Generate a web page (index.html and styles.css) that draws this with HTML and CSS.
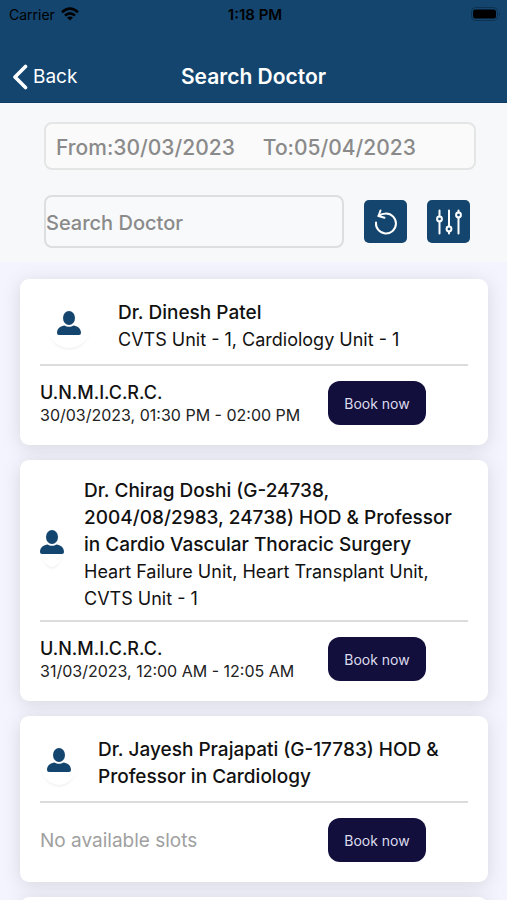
FILE: index.html
```
<!DOCTYPE html>
<html lang="en">

<head>
    <meta charset="UTF-8">
    <meta name="viewport" content="width=device-width, initial-scale=1.0">
    <title>Search Doctor</title>
    <link rel="stylesheet" href="styles.css">
</head>

<body>
    <!-- shared icons -->
    <svg class="sprite" aria-hidden="true">
        <symbol id="person" viewBox="0 0 24 24">
            <ellipse cx="12" cy="7" rx="6" ry="7" />
            <path d="M0 22C0 17 4 15 7.500 14.500C10 16.200 14 16.200 16.500 14.500C20 15 24 17 24 22Q24 24 22 24H2Q0 24 0 22Z" />
        </symbol>
    </svg>

    <header class="topbar">
        <div class="status">
            <div class="carrier">
                <span>Carrier</span>
                <svg width="18" height="14" viewBox="0 0 18 14" fill="none" stroke="#000" stroke-width="2.600">
                    <path d="M1 5.200Q9 -2 17 5.200" />
                    <path d="M4 8.500Q9 4.200 14 8.500" />
                    <path d="M9 13.500L6 10.600Q9 8.400 12 10.600Z" fill="#000" stroke="none" />
                </svg>
            </div>
            <div class="clock">1:18 PM</div>
            <svg class="battery" width="30" height="14" viewBox="0 0 30 14">
                <rect x="0.500" y="0.500" width="26" height="13" rx="4" fill="none" stroke="#0e3352" />
                <rect x="2" y="2.500" width="23" height="9" rx="2.500" />
                <path d="M28 5Q30 7 28 9Z" fill="#0e3352" />
            </svg>
        </div>
        <nav class="nav">
            <a class="back" href="#">
                <svg width="16" height="26" viewBox="0 0 16 26" fill="none" stroke="#fff" stroke-width="3.600" stroke-linecap="round" stroke-linejoin="round">
                    <path d="M13.500 2.500L3 13L13.500 23.500" />
                </svg>
                Back
            </a>
            <h1 class="title">Search Doctor</h1>
        </nav>
    </header>

    <form class="filters">
        <button class="dates" type="button">
            <span>From:30/03/2023</span>
            <span>To:05/04/2023</span>
        </button>
        <div class="search_row">
            <input class="search" type="text" placeholder="Search Doctor" aria-label="Search Doctor">
            <button class="icon_btn" type="button" aria-label="Reset">
                <svg width="24" height="26" viewBox="0 0 24 26" fill="none" stroke="#fff" stroke-width="2" stroke-linecap="round" stroke-linejoin="round">
                    <path d="M2 13.500A10 10 0 1 0 12 4.500Q8 4.500 4.500 7" />
                    <path d="M6.500 1.500L4.500 7L10.500 8.800" />
                </svg>
            </button>
            <button class="icon_btn" type="button" aria-label="Filter">
                <svg width="26" height="26" viewBox="0 0 26 26" fill="none" stroke="#fff" stroke-width="2" stroke-linecap="round">
                    <path d="M3.500 1.500V7.500M3.500 12.500V24.500" />
                    <path d="M13 1.500V17.500M13 22.500V24.500" />
                    <path d="M22.500 1.500V3.500M22.500 8.500V24.500" />
                    <circle cx="3.500" cy="10" r="2.400" />
                    <circle cx="13" cy="20" r="2.400" />
                    <circle cx="22.500" cy="6" r="2.400" />
                </svg>
            </button>
        </div>
    </form>

    <main class="list">
        <article class="card">
            <div class="doctor">
                <div class="avatar">
                    <div class="disc"><svg class="person"><use href="#person" /></svg></div>
                </div>
                <div class="info">
                    <h2 class="name">Dr. Dinesh Patel</h2>
                    <div>CVTS Unit - 1, Cardiology Unit - 1</div>
                </div>
            </div>
            <div class="slot">
                <div class="place">
                    <div class="hospital">U.N.M.I.C.R.C.</div>
                    <div class="time">30/03/2023, 01:30 PM - 02:00 PM</div>
                </div>
                <button class="book" type="button">Book now</button>
            </div>
        </article>

        <article class="card">
            <div class="doctor">
                <div class="avatar avatar_small">
                    <div class="disc"><svg class="person"><use href="#person" /></svg></div>
                </div>
                <div class="info">
                    <h2 class="name">Dr. Chirag Doshi (G-24738, 2004/08/2983, 24738) HOD &amp; Professor in Cardio Vascular Thoracic Surgery</h2>
                    <div>Heart Failure Unit, Heart Transplant Unit, CVTS Unit - 1</div>
                </div>
            </div>
            <div class="slot">
                <div class="place">
                    <div class="hospital">U.N.M.I.C.R.C.</div>
                    <div class="time">31/03/2023, 12:00 AM - 12:05 AM</div>
                </div>
                <button class="book" type="button">Book now</button>
            </div>
        </article>

        <article class="card">
            <div class="doctor">
                <div class="avatar avatar_medium">
                    <div class="disc"><svg class="person"><use href="#person" /></svg></div>
                </div>
                <div class="info">
                    <h2 class="name">Dr. Jayesh Prajapati (G-17783) HOD &amp; Professor in Cardiology</h2>
                </div>
            </div>
            <div class="slot">
                <div class="place empty">No available slots</div>
                <button class="book" type="button">Book now</button>
            </div>
        </article>

        <article class="card"></article>
    </main>
</body>

</html>
```
FILE: styles.css
```
* {
    box-sizing: border-box;
}

body {
    margin: 0;
    height: 100vh;
    display: flex;
    flex-direction: column;
    background-color: #f4f4fe;
    color: #111;
    font-family: 'Inter', sans-serif;
    font-size: 18px;
}

button,
input {
    font-family: inherit;
}

.sprite {
    display: none;
}

/* top bar */
.topbar {
    flex-shrink: 0;
    background-color: #14456e;
    border-bottom: 1px solid #0e3c63;
}

.status {
    height: 28px;
    padding: 0 6px 0 9px;
    display: grid;
    grid-template-columns: 1fr auto 1fr;
    align-items: center;
    color: #000;
    font-size: 14px;
}

.carrier {
    display: flex;
    align-items: center;
    gap: 6px;
}

.clock {
    font-size: 15px;
    font-weight: 600;
}

.battery {
    justify-self: end;
}

.nav {
    height: 74px;
    padding: 23px 12px 0;
    display: grid;
    grid-template-columns: 1fr auto 1fr;
    align-items: center;
    color: #fff;
}

.back {
    display: flex;
    align-items: center;
    gap: 5px;
    color: #fff;
    font-size: 19px;
    text-decoration: none;
}

.title {
    margin: 0;
    font-size: 21px;
    font-weight: 600;
}

/* dates and search */
.filters {
    flex-shrink: 0;
    padding: 19px 31px 14px 44px;
    display: flex;
    flex-direction: column;
    gap: 25px;
    background-color: #f7f8fa;
}

.dates {
    height: 48px;
    padding: 2px 10px 0;
    display: flex;
    align-items: center;
    gap: 28px;
    border: 2px solid #e4e6e6;
    border-radius: 8px;
    background-color: #fafafa;
    color: #8a8a8a;
    font-size: 21px;
    font-weight: 500;
}

.search_row {
    display: flex;
    align-items: center;
    gap: 20px;
    padding-right: 6px;
}

.search {
    flex: 1;
    min-width: 0;
    height: 53px;
    padding: 2px 0 0;
    border: 2px solid #dcdedf;
    border-radius: 8px;
    background-color: #f8f9fb;
    color: #111;
    font-size: 20px;
    font-weight: 500;
}

.search::placeholder {
    color: #8a8a8a;
}

.icon_btn {
    width: 43px;
    height: 43px;
    padding: 0;
    display: flex;
    justify-content: center;
    align-items: center;
    border: none;
    border-radius: 5px;
    background-color: #14456e;
}

/* doctor cards */
.list {
    flex: 1;
    min-height: 0;
    overflow: hidden;
    padding: 17px 19px 0 20px;
    display: flex;
    flex-direction: column;
    gap: 15px;
}

.card {
    flex-shrink: 0;
    padding: 17px 20px 20px;
    border-radius: 9px;
    background-color: #fff;
    box-shadow: 0 3px 18px rgba(90, 90, 90, 0.18);
}

.doctor {
    min-height: 70px;
    padding-bottom: 8px;
    display: flex;
    align-items: center;
    gap: 20px;
    border-bottom: 2px solid #dcdcdc;
    line-height: 27px;
}

.avatar {
    width: 58px;
    flex-shrink: 0;
    display: flex;
    justify-content: center;
}

.avatar_medium {
    width: 38px;
}

.avatar_small {
    width: 24px;
}

.disc {
    width: 44px;
    height: 44px;
    padding-bottom: 6px;
    display: flex;
    justify-content: center;
    align-items: center;
    border-radius: 50%;
    background-color: #fff;
    box-shadow: 0 3px 3px -2px #ececec;
}

.person {
    width: 24px;
    height: 24px;
    flex-shrink: 0;
    fill: #14456e;
}

.info {
    flex: 1;
}

.name {
    margin: 0;
    font-size: 19px;
    font-weight: 500;
}

.slot {
    padding-top: 15px;
    display: flex;
    align-items: center;
}

.place {
    width: 288px;
}

.hospital {
    font-weight: 500;
    line-height: 24px;
}

.time {
    font-size: 16px;
    line-height: 20px;
    color: #222;
}

.empty {
    color: #a0a0a0;
    font-size: 19px;
}

.book {
    width: 98px;
    height: 44px;
    padding: 0;
    border: none;
    border-radius: 12px;
    background-color: #120f3d;
    color: #dcdcec;
    font-size: 14px;
}
```
